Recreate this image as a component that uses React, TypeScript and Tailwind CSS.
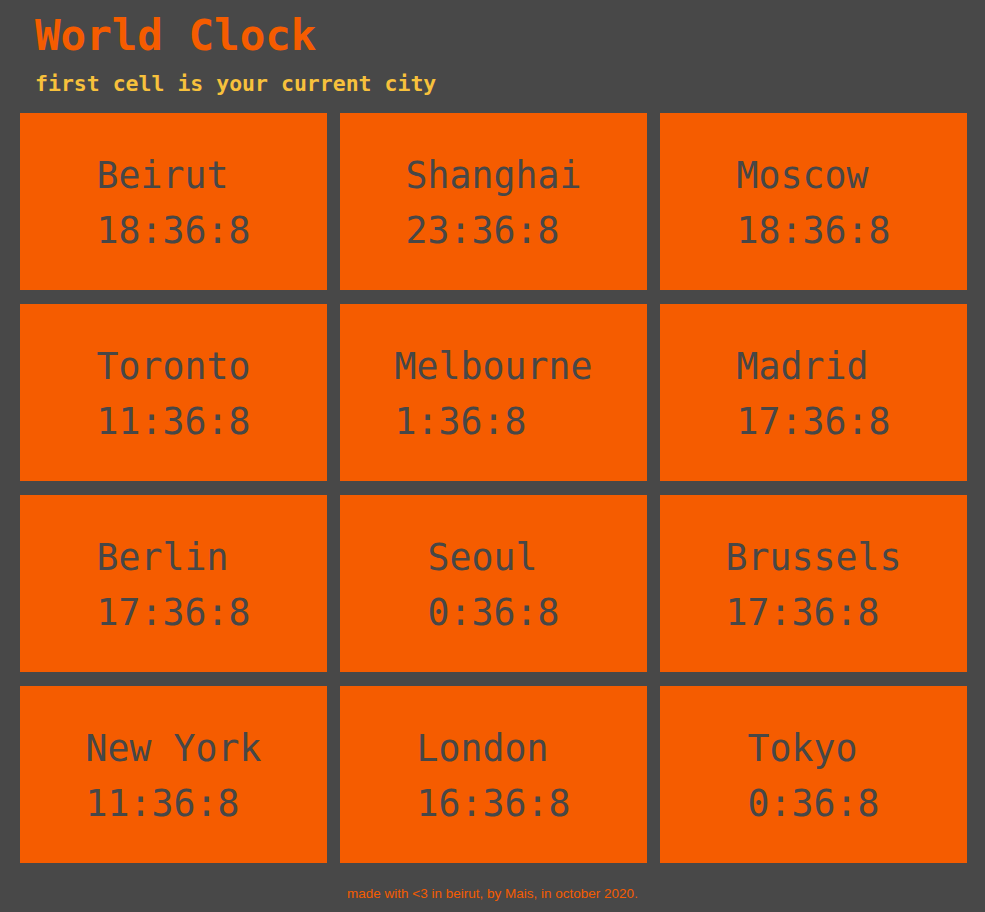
import React from "react";

const cities = [
  { name: "Beirut", time: "18:36:8" },
  { name: "Shanghai", time: "23:36:8" },
  { name: "Moscow", time: "18:36:8" },
  { name: "Toronto", time: "11:36:8" },
  { name: "Melbourne", time: "1:36:8" },
  { name: "Madrid", time: "17:36:8" },
  { name: "Berlin", time: "17:36:8" },
  { name: "Seoul", time: "0:36:8" },
  { name: "Brussels", time: "17:36:8" },
  { name: "New York", time: "11:36:8" },
  { name: "London", time: "16:36:8" },
  { name: "Tokyo", time: "0:36:8" },
];

const mono = "font-['DejaVu_Sans_Mono',monospace]";

const App = () => {
  return (
    <div className="min-h-[912px] w-full bg-[#484848]">
      <div className={`${mono} pl-[35px] pt-[10px]`}>
        <h1 className="text-[42.5px] font-bold leading-[52px] text-[#f55c00]">World Clock</h1>
        <p className="mt-[9px] text-[21.5px] font-bold leading-[26px] text-[#f7c13c]">first cell is your current city</p>
      </div>
      <div className="mt-[16px] grid grid-cols-[307px_307px_307px] gap-x-[13px] gap-y-[14px] pl-[20px]">
        {cities.map((c) => (
          <div key={c.name} className="flex h-[177px] items-center justify-center bg-[#f55c00] pt-[2px]">
            <div className={`${mono} text-[36.5px] leading-[55px] text-[#474747] whitespace-pre`}>
              <div>{c.name}</div>
              <div>{c.time}</div>
            </div>
          </div>
        ))}
      </div>
      <p className="mt-[21px] text-center font-['Liberation_Sans',sans-serif] text-[13.5px] text-[#f55c00]">
        made with &lt;3 in beirut, by Mais, in october 2020.
      </p>
    </div>
  );
};

export default App;
